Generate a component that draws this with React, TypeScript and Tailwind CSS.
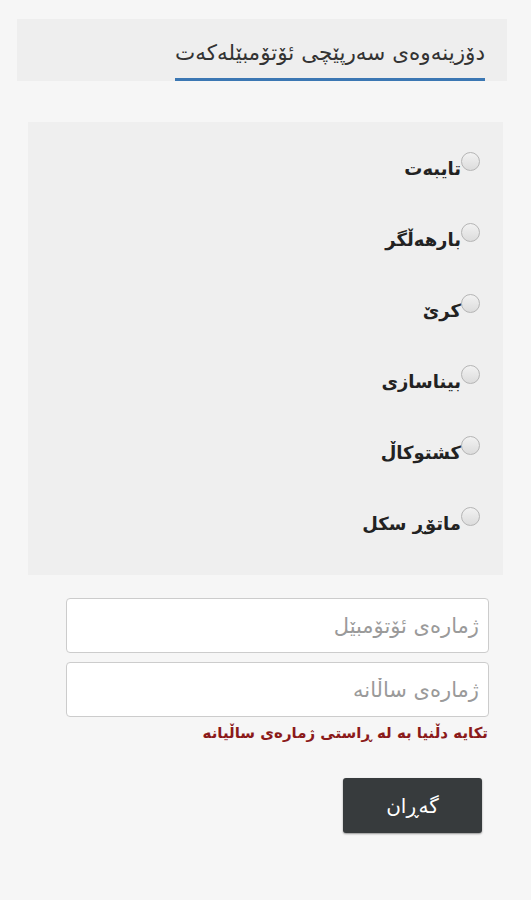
import React from 'react';

const categories = ['تایبەت', 'بارهەڵگر', 'کرێ', 'بیناسازی', 'کشتوکاڵ', 'ماتۆڕ سکل'];

export default function App() {
  return (
    <div
      dir="rtl"
      className="min-h-screen w-full bg-[#f6f6f6] pt-[19px]"
      style={{ fontFamily: '"DejaVu Sans", sans-serif' }}
    >
      {/* Header tab */}
      <div className="mr-[24px] ml-[17px] h-[62px] bg-[#eeeeee] flex items-end pr-[22px]">
        <div className="border-b-[3px] border-[#3b77b3] pb-[15px] text-[21.5px] leading-none text-[#333]">
          دۆزینەوەی سەرپێچی ئۆتۆمبێلەکەت
        </div>
      </div>

      {/* Category panel */}
      <div className="mt-[41px] mr-[28px] ml-[28px] bg-[#efefef] pt-[4px] pb-[23px] pr-[23px]">
        {categories.map((c) => (
          <label key={c} className="flex h-[71px] items-center cursor-pointer">
            <span className="w-[19px] h-[19px] rounded-full border border-[#b5b5b5] bg-gradient-to-b from-[#f2f2f2] to-[#dcdcdc] shrink-0" />
            <span className="text-[18px] font-bold text-[#222] leading-none mt-[14px]">{c}</span>
          </label>
        ))}
      </div>

      {/* Inputs */}
      <div className="mt-[23px] mr-[42px] ml-[66px] flex flex-col gap-[9px]">
        <input
          placeholder="ژمارەی ئۆتۆمبێل"
          className="h-[55px] w-full rounded-[4px] border border-[#cccccc] bg-white px-[9px] text-[21px] placeholder:text-[#9a9a9a] outline-none"
        />
        <input
          placeholder="ژمارەی ساڵانە"
          className="h-[55px] w-full rounded-[4px] border border-[#cccccc] bg-white px-[9px] text-[21px] placeholder:text-[#9a9a9a] outline-none"
        />
      </div>
      <div className="mr-[43px] mt-[6px] text-[15px] font-bold text-[#8b1a1a] leading-[20px]">
        تکایە دڵنیا بە لە ڕاستی ژمارەی ساڵیانە
      </div>

      <div className="mr-[49px] mt-[35px]">
        <button className="h-[55px] w-[139px] rounded-[3px] bg-[#373b3d] text-white text-[20px] shadow-[0_1px_2px_rgba(0,0,0,0.4)]">
          گەڕان
        </button>
      </div>
    </div>
  );
}
